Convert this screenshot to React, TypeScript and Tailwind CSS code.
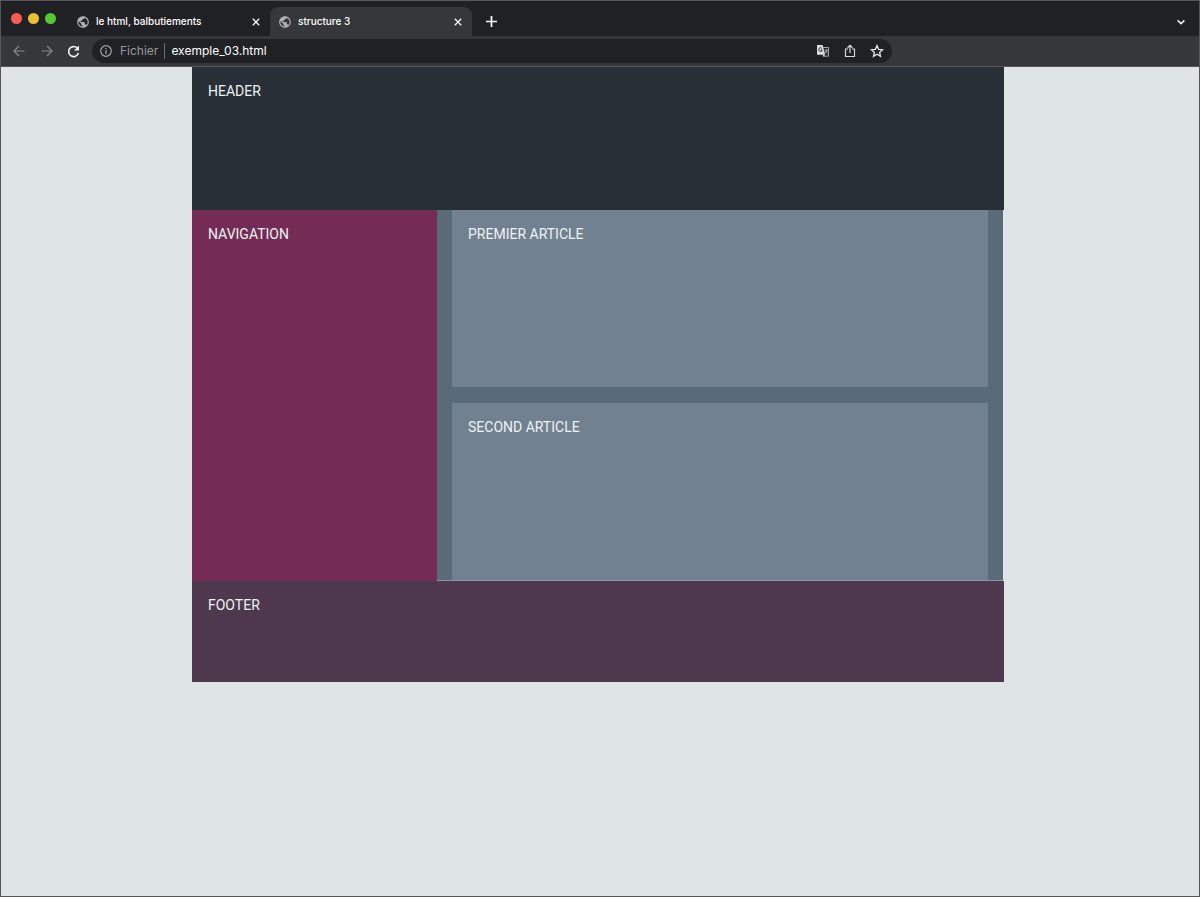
import clsx from 'clsx'
import { MdPublic } from 'react-icons/md'

const tabs = [
  { title: 'le html, balbutiements', current: false },
  { title: 'structure 3', current: true },
]

const articles = ['Premier article', 'Second article']

function CloseIcon() {
  return (
    <svg viewBox="0 0 8 8" className="size-2" fill="none" stroke="#f1f3f4" strokeWidth="1.4" aria-hidden="true">
      <path d="m.8.8 6.4 6.4M7.2.8.8 7.2" />
    </svg>
  )
}

function TranslateIcon() {
  return (
    <svg viewBox="0 0 14 14" className="size-3.5" aria-hidden="true">
      <path d="M7 3.5h5.5v8.7H7.3" fill="none" stroke="#a3a7ab" />
      <path d="M1 1h5.6l2.6 9.7H1z" fill="#dadce0" />
      <path d="M6.6 10.7h2.6l-1.7 2z" fill="#dadce0" />
      <path d="M6 4.5a1.8 1.8 0 1 0 .3 1.6H4.7" fill="none" stroke="#202124" strokeWidth=".9" />
      <path d="M8.7 6.2h3.2M10.2 5.4v.8M11.3 6.2c-.3 1.3-1 2.2-2 3M9.3 7.2c.5 1 1.2 1.7 2.2 2.4" fill="none" stroke="#c4c7ca" strokeWidth=".8" />
    </svg>
  )
}

function TabStrip() {
  return (
    <div className="flex h-[35px] items-end bg-[#202125] pt-1.5 text-[10px] font-medium text-white">
      <div className="mr-3 flex h-full items-center gap-1.5 pb-1.5 pl-2.5">
        <span className="size-[11px] rounded-full bg-[#fc5b55]" />
        <span className="size-[11px] rounded-full bg-[#ecc12f]" />
        <span className="size-[11px] rounded-full bg-[#55c92e]" />
      </div>
      {tabs.map((tab) => (
        <div
          key={tab.title}
          className={clsx(
            'flex h-full w-[202px] items-center gap-1.5 rounded-t-lg pr-2.5 pl-2',
            tab.current && 'bg-[#36373b]'
          )}
        >
          <MdPublic className="size-3.5 shrink-0 text-[#adb2b8]" aria-hidden="true" />
          <a href="#" className="flex-1 truncate">
            {tab.title}
          </a>
          <button aria-label="Fermer l’onglet">
            <CloseIcon />
          </button>
        </div>
      ))}
      <button className="flex h-full items-center pl-3.5" aria-label="Nouvel onglet">
        <svg viewBox="0 0 11 11" className="size-[11px]" fill="none" stroke="#fff" strokeWidth="1.7" aria-hidden="true">
          <path d="M5.5 0v11M0 5.5h11" />
        </svg>
      </button>
      <button className="ml-auto flex h-full items-center pr-3.5" aria-label="Rechercher un onglet">
        <svg viewBox="0 0 8 8" className="size-2" fill="none" stroke="#f1f3f4" strokeWidth="1.5" aria-hidden="true">
          <path d="m.6 2.4 3.4 3.2 3.4-3.2" />
        </svg>
      </button>
    </div>
  )
}

function Toolbar() {
  return (
    <div className="flex h-[31px] items-center border-b border-[#56575b] bg-[#36373b] pl-3 text-xs">
      <button aria-label="Retour">
        <svg viewBox="0 0 12 12" className="size-3" fill="none" stroke="#87898d" strokeWidth="1.2" aria-hidden="true">
          <path d="M11.5 6H1M6 1 1 6l5 5" />
        </svg>
      </button>
      <button className="ml-4" aria-label="Avancer">
        <svg viewBox="0 0 12 12" className="size-3" fill="none" stroke="#87898d" strokeWidth="1.2" aria-hidden="true">
          <path d="M.5 6H11M6 1l5 5-5 5" />
        </svg>
      </button>
      <button className="ml-3.5" aria-label="Actualiser">
        <svg viewBox="0 0 13 13" className="size-[13px]" fill="none" aria-hidden="true">
          <path d="M10.3 3.2A5 5 0 1 0 11.4 8" stroke="#f1f3f4" strokeWidth="1.6" />
          <path d="M12 .6v5H7z" fill="#f1f3f4" />
        </svg>
      </button>
      <div className="mr-4 ml-3 flex h-6 max-w-[800px] flex-1 items-center rounded-full bg-[#202125] px-2">
        <svg viewBox="0 0 12 12" className="size-3 shrink-0" fill="none" stroke="#a3a7ab" aria-hidden="true">
          <circle cx="6" cy="6" r="5.3" strokeWidth="1.2" />
          <path d="M6 5.2V9M6 3v1.2" strokeWidth="1.3" />
        </svg>
        <label htmlFor="url" className="ml-2 border-r border-[#6b6d71] pr-1.5 leading-4 text-[#969a9f]">
          Fichier
        </label>
        <input
          id="url"
          type="text"
          defaultValue="exemple_03.html"
          className="ml-1.5 min-w-0 flex-1 bg-transparent text-white outline-none"
        />
        <div className="flex items-center gap-3.5">
          <button aria-label="Traduire cette page">
            <TranslateIcon />
          </button>
          <button aria-label="Partager">
            <svg viewBox="0 0 12 14" className="h-3.5 w-3" fill="none" stroke="#d5d7da" strokeWidth="1.2" aria-hidden="true">
              <path d="M4 5H1.5v7.5h9V5H8M6 9V1.5M3.5 3.7 6 1.3l2.5 2.4" />
            </svg>
          </button>
          <button aria-label="Ajouter aux favoris">
            <svg viewBox="0 0 14 14" className="size-3.5" fill="none" stroke="#e3e5e8" strokeWidth="1.3" aria-hidden="true">
              <path d="m7 1.6 1.6 3.7 4 .4-3 2.7.9 4L7 10.3l-3.5 2.1.9-4-3-2.7 4-.4z" />
            </svg>
          </button>
        </div>
      </div>
    </div>
  )
}

function PageLayout() {
  return (
    <div className="mx-auto w-full max-w-[812px] text-sm leading-4 text-[#edf3f3] uppercase">
      <header className="h-[143px] bg-[#282f37] p-4">Header</header>
      <div className="flex items-stretch">
        <nav className="w-[245px] shrink-0 bg-[#742b55] p-4">Navigation</nav>
        <main className="mr-px flex flex-1 flex-col gap-4 border-b border-[#8e93a3] bg-[#596a79] px-[15px]">
          {articles.map((title) => (
            <article key={title} className="h-[177px] bg-[#718190] p-4">
              {title}
            </article>
          ))}
        </main>
      </div>
      <footer className="h-[101px] bg-[#4d384e] p-4">Footer</footer>
    </div>
  )
}

export default function App() {
  return (
    <div className="flex min-h-screen flex-col border border-[#56575b] bg-[#dee5e4] font-[Roboto,sans-serif]">
      <div className="font-[Inter,sans-serif]">
        <TabStrip />
        <Toolbar />
      </div>
      <div className="flex-1 pr-1">
        <PageLayout />
      </div>
    </div>
  )
}
